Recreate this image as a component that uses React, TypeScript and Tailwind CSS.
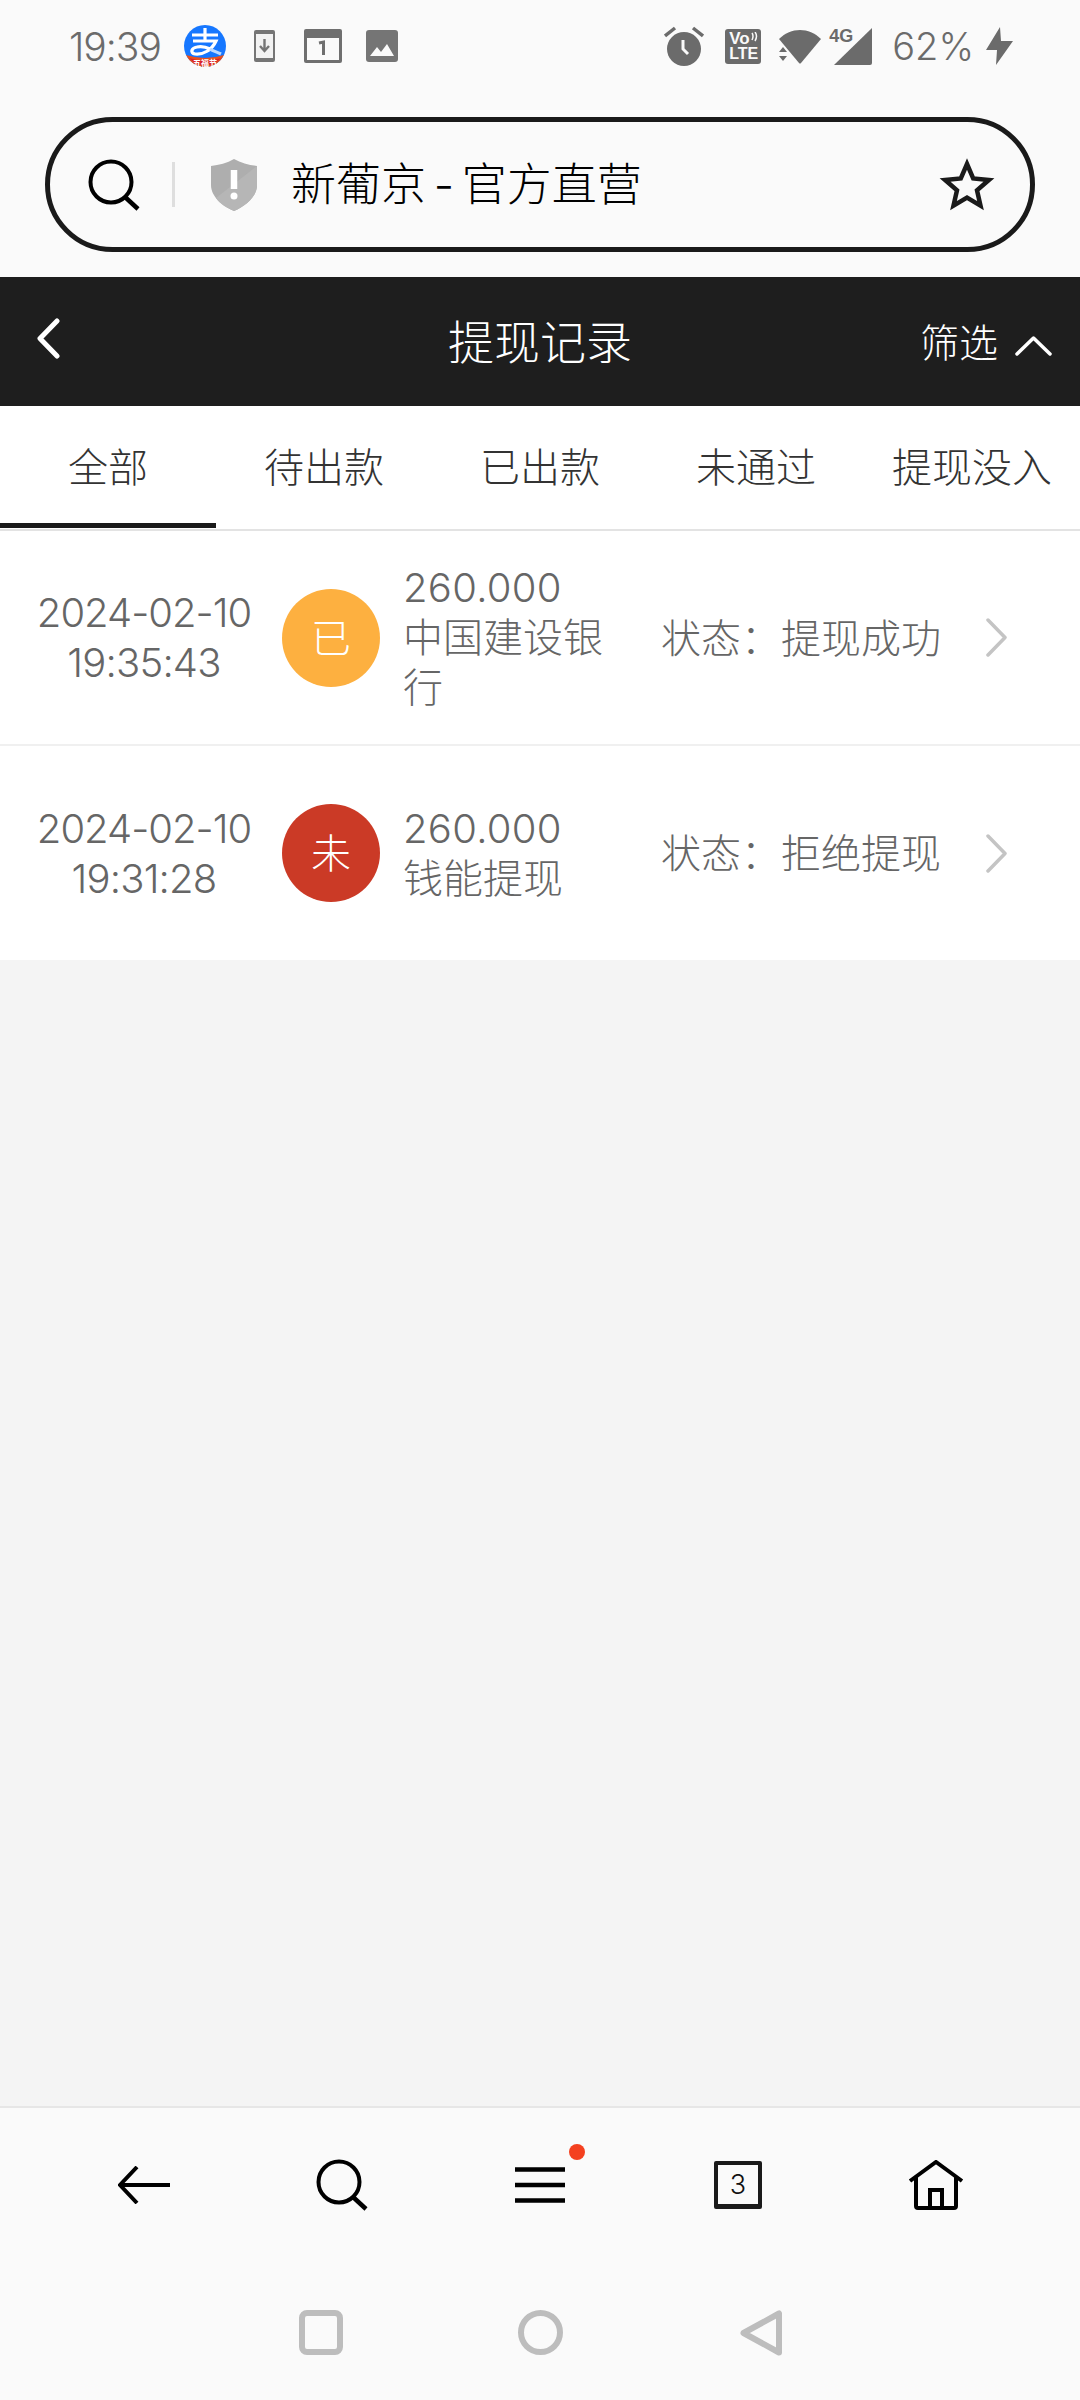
// Withdrawal records screen in a mobile browser
const tabs = ['全部', '待出款', '已出款', '未通过', '提现没入'];

const records = [
    { date: '2024-02-10', time: '19:35:43', badge: '已', badgeClass: 'bg-[#fdb040]', amount: '260.000', bank: '中国建设银行', status: '状态：提现成功', rowClass: 'h-[213px]', textClass: '' },
    { date: '2024-02-10', time: '19:31:28', badge: '未', badgeClass: 'bg-[#cb3a26]', amount: '260.000', bank: '钱能提现', status: '状态：拒绝提现', rowClass: 'h-[214px]', textClass: 'pt-[2px]' },
];

function AlipayIcon() {
    return (
        <svg width="42" height="42" viewBox="0 0 42 42">
            <circle cx="21" cy="21" r="21" fill="#1677ff" />
            <path d="M2 30 Q21 36 40 30 A21 21 0 0 1 2 30 Z" fill="#e8501c" />
            <path d="M5 33 Q21 38 37 33 A21 21 0 0 1 5 33 Z" fill="#d9232a" />
            <path d="M8 10 H34 M21 3 V16 M9 16 H32 C28 25 19 30 11 29 C6 28 7 23 13 22 C18 21 22 22 26 24" fill="none" stroke="#fff" strokeWidth="3.2" />
            <path d="M26 24 C29 26 33 27 37 29" fill="none" stroke="#bcd9ff" strokeWidth="3.2" />
            <text x="21" y="40.500" textAnchor="middle" fontSize="8" fontWeight="700" fill="#fff">五福节</text>
        </svg>
    );
}

function StatusBar() {
    return (
        <div className="flex h-[92px] items-center justify-between pl-[69px] pr-[67px] text-[#6b6b6b]">
            <div className="flex items-center">
                <span className="w-[115px] text-[39px] font-light tracking-[-1px] leading-none">19:39</span>
                <AlipayIcon />
                <svg className="ml-[28px]" width="21" height="32" viewBox="0 0 21 32">
                    <rect width="21" height="32" rx="2" fill="#757575" />
                    <rect x="2" y="4" width="17" height="24" fill="#f2f2f2" />
                    <path d="M10.5 9 V20 M6 16 L10.5 21 L15 16" fill="none" stroke="#757575" strokeWidth="2.4" />
                </svg>
                <svg className="ml-[29px]" width="38" height="34" viewBox="0 0 38 34">
                    <rect width="38" height="34" rx="2" fill="#6f6f6f" />
                    <rect x="3" y="9" width="32" height="22" fill="#fafafa" />
                    <path d="M15 14 L19.500 13 V26" fill="none" stroke="#6f6f6f" strokeWidth="3" />
                </svg>
                <svg className="ml-[24px]" width="32" height="32" viewBox="0 0 32 32">
                    <rect width="32" height="32" rx="3" fill="#757575" />
                    <path d="M4 26 L11 17 L15 22 L21 14 L28 26 Z" fill="#fafafa" />
                </svg>
            </div>
            <div className="flex items-center">
                <svg width="40" height="40" viewBox="0 0 40 40">
                    <circle cx="20" cy="23" r="17" fill="#6b6b6b" />
                    <path d="M19 14 V23 L24 28" fill="none" stroke="#fafafa" strokeWidth="3" />
                    <path d="M1 10 L11 2 M39 10 L29 2" fill="none" stroke="#6b6b6b" strokeWidth="3.500" />
                </svg>
                <div className="relative ml-[21px] flex h-[35px] w-[36px] flex-col justify-center rounded-[3px] bg-[#6b6b6b] pl-[4px] font-['Liberation_Sans',sans-serif] text-[17px] font-bold leading-[15px] text-[#fafafa]">
                    <span>Vo</span>
                    <span className="text-[16px]">LTE</span>
                    <svg className="absolute right-[3px] top-[3px]" width="7" height="10" viewBox="0 0 7 10">
                        <path d="M1 1 Q3 4 1 8 M4 0 Q7 4 4 9" fill="none" stroke="#fafafa" strokeWidth="1.500" />
                    </svg>
                </div>
                <svg className="ml-[18px]" width="42" height="35" viewBox="0 0 42 35">
                    <path d="M0 10 C12 -2 30 -2 42 10 L22 34 Q21 35 20 34 Z" fill="#6b6b6b" />
                    <path d="M-1 17 L13 34 H-1 Z" fill="#fafafa" />
                    <path d="M0 23 L4 18 L8 23 Z M0 27 H8 L4 32 Z" fill="#6b6b6b" />
                </svg>
                <div className="relative ml-[10px] h-[37px] w-[41px]">
                    <svg className="absolute bottom-0 right-0" width="38" height="37" viewBox="0 0 38 37">
                        <path d="M0 37 L38 0 V35 Q38 37 36 37 Z" fill="#6b6b6b" />
                    </svg>
                    <span className="absolute left-[-2px] top-[-1px] font-['Liberation_Sans',sans-serif] text-[18px] font-bold leading-none">4G</span>
                </div>
                <span className="ml-[20px] text-[38px] font-light leading-none">62%</span>
                <svg className="ml-[12px]" width="27" height="38" viewBox="0 0 27 38">
                    <path d="M14 0 L0 23 H11 L10 38 L27 14 H15 Z" fill="#6b6b6b" />
                </svg>
            </div>
        </div>
    );
}

function AddressBar() {
    return (
        <div className="px-[45px] pb-[25px] pt-[25px]">
            <div className="flex h-[135px] items-center rounded-full border-[5px] border-[#1a1a1a] pl-[38px] pr-[35px]">
                <svg width="52" height="52" viewBox="0 0 52 52">
                    <circle cx="23" cy="23" r="20.500" fill="none" stroke="#000" strokeWidth="4" />
                    <path d="M37 38 L50 50" stroke="#000" strokeWidth="4.500" />
                </svg>
                <div className="ml-[32px] h-[45px] w-[3px] bg-[#dedede]" />
                <svg className="ml-[36px]" width="46" height="52" viewBox="0 0 46 52">
                    <path d="M23 0 C30 4 38 6 46 7 V26 C46 38 34 47 23 52 C12 47 0 38 0 26 V7 C8 6 16 4 23 0 Z" fill="#aeaeae" />
                    <path d="M46 7 V26 C46 38 34 47 23 52 C16 49 9 45 5 39 Z" fill="#b6b6b6" />
                    <path d="M23 11 V30" stroke="#fff" strokeWidth="6.500" />
                    <circle cx="23" cy="37" r="3.500" fill="#fff" />
                </svg>
                <span className="ml-[34px] text-[45px] font-light leading-none text-black [word-spacing:-5px]">新葡京 - 官方直营</span>
                <svg className="ml-auto" width="56" height="53" viewBox="0 0 56 53">
                    <path d="M28 6 L34.2 20.500 L49.900 21.900 L38 32.200 L41.500 47.600 L28 39.500 L14.500 47.600 L18 32.200 L6.100 21.900 L21.800 20.500 Z" fill="none" stroke="#1a1a1a" strokeWidth="4.500" />
                </svg>
            </div>
        </div>
    );
}

function Header() {
    return (
        <div className="grid h-[129px] grid-cols-[1fr_auto_1fr] items-center bg-[#1e1e1e] text-white">
            <div className="pl-[36px]">
                <svg className="mb-[7px]" width="24" height="41" viewBox="0 0 24 41">
                    <path d="M21 3 L4 20.500 L21 38" fill="none" stroke="#fff" strokeWidth="5" strokeLinecap="round" strokeLinejoin="round" />
                </svg>
            </div>
            <span className="text-[46px] font-light leading-none">提现记录</span>
            <div className="flex items-center justify-end pr-[28px]">
                <span className="pt-[2px] text-[39px] font-light leading-none">筛选</span>
                <svg className="ml-[17px] mt-[7px]" width="37" height="21" viewBox="0 0 37 21">
                    <path d="M2 19 L18.500 3 L35 19" fill="none" stroke="#fff" strokeWidth="3.500" strokeLinecap="round" strokeLinejoin="round" />
                </svg>
            </div>
        </div>
    );
}

function Tabs() {
    return (
        <div className="flex h-[125px] border-b-2 border-[#e3e3e3] bg-white">
            {tabs.map((tab, i) => (
                <div key={tab} className="relative flex w-[216px] items-center justify-center pt-[1px] text-[40px] font-light text-[#333]">
                    {tab}
                    {i === 0 && <span className="absolute inset-x-0 bottom-[1px] h-[5px] bg-[#1a1a1a]" />}
                </div>
            ))}
        </div>
    );
}

function RecordRow({ record }: { record: (typeof records)[number] }) {
    return (
        <div className={`flex items-center bg-white pl-[22px] text-[40px] font-light leading-[50px] text-[#666] ${record.rowClass}`}>
            <div className={`w-[244px] text-center ${record.textClass}`}>
                <div className="tracking-[-1px]">{record.date}</div>
                <div className="tracking-[-0.8px]">{record.time}</div>
            </div>
            <div className={`ml-[16px] flex size-[98px] shrink-0 items-center justify-center rounded-full pt-[2px] text-white ${record.badgeClass}`}>
                {record.badge}
            </div>
            <div className={`ml-[23px] w-[216px] shrink-0 ${record.textClass}`}>
                <div className="tracking-[0.3px]">{record.amount}</div>
                <div>{record.bank}</div>
            </div>
            <div className="ml-[42px] w-[320px] shrink-0 pt-[2px]">{record.status}</div>
            <svg className="ml-[4px]" width="23" height="39" viewBox="0 0 23 39">
                <path d="M3 2 L20 19.500 L3 37" fill="none" stroke="#c4c4c4" strokeWidth="3.500" strokeLinecap="round" strokeLinejoin="round" />
            </svg>
        </div>
    );
}

function BottomBar() {
    return (
        <div className="border-t-2 border-[#e6e6e6] bg-[#fafafa]">
            <div className="flex h-[154px] items-center px-[45px]">
                <div className="flex w-[198px] justify-center">
                    <svg width="52" height="38" viewBox="0 0 52 38">
                        <path d="M19 1 L2 19 L19 37 M2 19 H52" fill="none" stroke="#000" strokeWidth="4" />
                    </svg>
                </div>
                <div className="flex w-[198px] justify-center">
                    <svg width="52" height="52" viewBox="0 0 52 52">
                        <circle cx="23" cy="23" r="20.500" fill="none" stroke="#000" strokeWidth="4" />
                        <path d="M37 38 L50 50" stroke="#000" strokeWidth="4.500" />
                    </svg>
                </div>
                <div className="relative flex w-[198px] justify-center">
                    <svg width="50" height="36" viewBox="0 0 50 36">
                        <path d="M0 2.500 H50 M0 18 H50 M0 33.500 H50" stroke="#000" strokeWidth="4.500" />
                    </svg>
                    <span className="absolute left-[128px] top-[-23px] size-[16px] rounded-full bg-[#f4401f]" />
                </div>
                <div className="flex w-[198px] justify-center">
                    <div className="flex size-[48px] items-center justify-center rounded-[2px] border-[4px] border-b-[5px] border-[#1a1a1a] text-[27px] font-light leading-none text-[#111]">3</div>
                </div>
                <div className="flex w-[198px] justify-center">
                    <svg width="56" height="50" viewBox="0 0 56 50">
                        <path d="M2 21 L28 2 L54 21 M8 17 V46 Q8 48 10 48 H46 Q48 48 48 46 V17 M22 48 V30 H34 V48" fill="none" stroke="#000" strokeWidth="4" />
                    </svg>
                </div>
            </div>
            <div className="flex h-[138px] items-start pl-[299px] pt-[48px]">
                <div className="h-[45px] w-[44px] rounded-[8px] border-[6px] border-[#bdbdbd]" />
                <div className="ml-[175px] size-[45px] rounded-full border-[6px] border-[#bdbdbd]" />
                <svg className="ml-[177px]" width="43" height="46" viewBox="0 0 43 46">
                    <path d="M39 3.500 V42.500 L3.500 23 Z" fill="none" stroke="#bdbdbd" strokeWidth="6" strokeLinejoin="round" />
                </svg>
            </div>
        </div>
    );
}

export default function App() {
    return (
        <div className="flex h-[2400px] w-[1080px] flex-col bg-[#fafafa] font-['Inter','Noto_Sans_CJK_SC',sans-serif]">
            <StatusBar />
            <AddressBar />
            <Header />
            <Tabs />
            <RecordRow record={records[0]} />
            <div className="h-[2px] bg-[#f0f0f0]" />
            <RecordRow record={records[1]} />
            <div className="flex-1 bg-[#f4f4f4]" />
            <BottomBar />
        </div>
    );
}
